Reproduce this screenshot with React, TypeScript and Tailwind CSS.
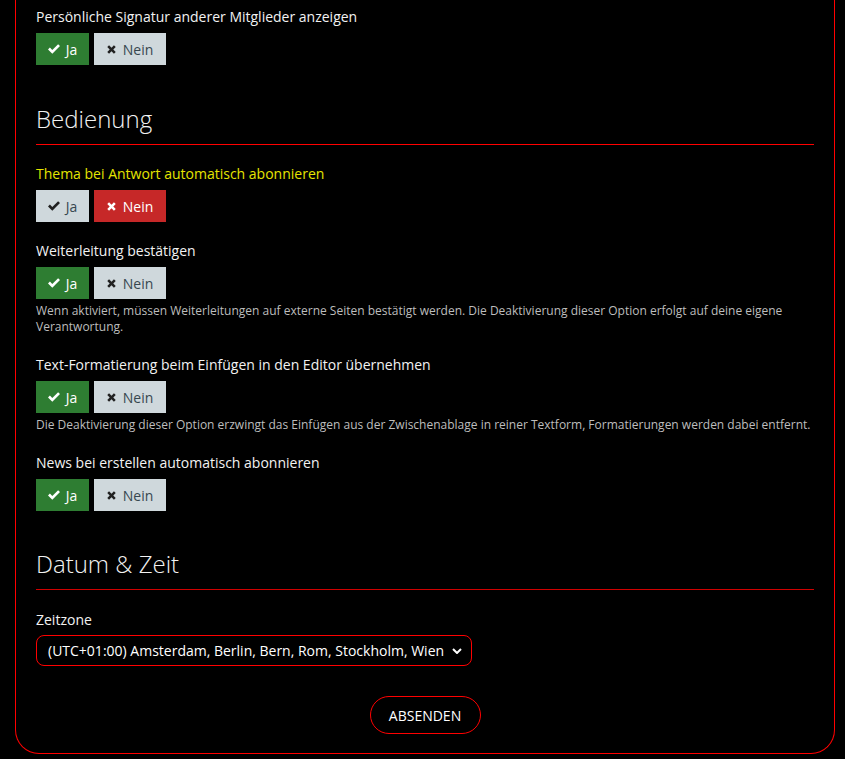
import React from 'react'

type Choice = 'yes' | 'no'

const OPTIONS: { label: string; value: Choice; help?: string; highlight?: boolean }[] = [
  {
    label: 'Thema bei Antwort automatisch abonnieren',
    value: 'no',
    highlight: true,
  },
  {
    label: 'Weiterleitung bestätigen',
    value: 'yes',
    help: 'Wenn aktiviert, müssen Weiterleitungen auf externe Seiten bestätigt werden. Die Deaktivierung dieser Option erfolgt auf deine eigene Verantwortung.',
  },
  {
    label: 'Text-Formatierung beim Einfügen in den Editor übernehmen',
    value: 'yes',
    help: 'Die Deaktivierung dieser Option erzwingt das Einfügen aus der Zwischenablage in reiner Textform, Formatierungen werden dabei entfernt.',
  },
  {
    label: 'News bei erstellen automatisch abonnieren',
    value: 'yes',
  },
]

const CheckIcon = () => (
  <svg viewBox="0 0 12 10" className="h-[10px] w-[12px]" fill="currentColor">
    <path d="M4.3 9.8 0 5.5 1.9 3.6 4.3 6 10.1 0.2 12 2.1Z" />
  </svg>
)

const TimesIcon = () => (
  <svg viewBox="0 0 10 10" className="h-[9px] w-[9px]" fill="currentColor">
    <path d="M0.3 2.3 2.3 0.3 5 3 7.7 0.3 9.7 2.3 7 5 9.7 7.7 7.7 9.7 5 7 2.3 9.7 0.3 7.7 3 5Z" />
  </svg>
)

const YesNo = ({ value }: { value: Choice }) => {
  const yes = value === 'yes'
  return (
    <div className="flex gap-[5px]">
      <button
        className={`flex h-[32px] w-[53px] items-center justify-center gap-[6px] text-[14px] ${
          yes ? 'bg-[#2e7d32] text-white' : 'bg-[#cfd8dc] text-[#37474f]'
        }`}
      >
        <span className={yes ? 'text-white' : 'text-[#212121]'}>
          <CheckIcon />
        </span>
        Ja
      </button>
      <button
        className={`flex h-[32px] w-[72px] items-center justify-center gap-[7px] text-[14px] ${
          !yes ? 'bg-[#c62828] text-white' : 'bg-[#cfd8dc] text-[#37474f]'
        }`}
      >
        <span className={!yes ? 'text-white' : 'text-[#212121]'}>
          <TimesIcon />
        </span>
        Nein
      </button>
    </div>
  )
}

const Option = ({
  label,
  value,
  help,
  highlight,
}: {
  label: string
  value: Choice
  help?: string
  highlight?: boolean
}) => (
  <div className={help ? 'mb-[20px]' : 'mb-[19px]'}>
    <label
      className={`mb-[6px] block text-[14px] leading-[20px] ${
        highlight ? 'text-[#e5e500]' : 'text-[#f2f2f2]'
      }`}
    >
      {label}
    </label>
    <YesNo value={value} />
    {help && <p className="mt-[4px] text-[12px] leading-[16px] text-[#bdbdbd]">{help}</p>}
  </div>
)

export default function App() {
  return (
    <div
      className="min-h-screen bg-black pb-[6px]"
      style={{ fontFamily: '"Open Sans", "Noto Sans", sans-serif' }}
    >
      <div className="ml-[15px] mr-[10px] rounded-b-[24px] border border-t-0 border-[#ff0000] px-[20px] pt-[7px] pb-[19px]">
        <label className="mb-[6px] block text-[14px] leading-[20px] text-[#f2f2f2]">
          Persönliche Signatur anderer Mitglieder anzeigen
        </label>
        <YesNo value="yes" />

        <h2 className="mt-[39px] pb-[10px] text-[24px] leading-[30px] font-light text-[#f2f2f2]">
          Bedienung
        </h2>
        <div className="mb-[19px] h-px bg-[#ff0000]" />

        {OPTIONS.map((opt) => (
          <Option key={opt.label} {...opt} />
        ))}

        <h2 className="mt-[38px] pb-[10px] text-[24px] leading-[30px] font-light text-[#f2f2f2]">
          Datum &amp; Zeit
        </h2>
        <div className="mb-[20px] h-px bg-[#d00000]" />

        <label className="mb-[5px] block text-[14px] leading-[20px] text-[#f2f2f2]">
          Zeitzone
        </label>
        <div className="relative h-[31px] w-[436px] rounded-[8px] border border-[#ff0000] text-[14px] text-white">
          <div className="flex h-full items-center pl-[11px]">
            (UTC+01:00) Amsterdam, Berlin, Bern, Rom, Stockholm, Wien
          </div>
          <svg
            viewBox="0 0 10 6"
            className="absolute top-[12px] right-[9px] h-[6px] w-[10px]"
            fill="none"
            stroke="white"
            strokeWidth="2"
          >
            <path d="M1 1 5 5 9 1" />
          </svg>
        </div>

        <div className="mt-[30px] flex justify-center">
          <button className="h-[38px] w-[111px] rounded-full border border-[#ff0000] text-[14px] text-white">
            ABSENDEN
          </button>
        </div>
      </div>
    </div>
  )
}
